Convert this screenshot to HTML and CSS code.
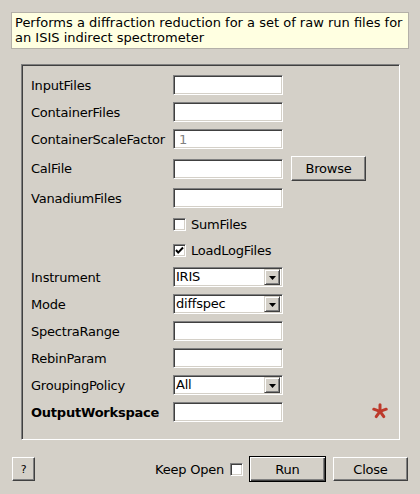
FILE: index.html
```html
<!DOCTYPE html>
<html>
<head>
<meta charset="utf-8">
<link rel="stylesheet" href="styles.css">
</head>
<body>
<div class="desc">Performs a diffraction reduction for a set of raw run files for<br>an ISIS indirect spectrometer</div>
<div class="group">
  <div class="row"><span class="lbl">InputFiles</span><span class="field"></span></div>
  <div class="row"><span class="lbl">ContainerFiles</span><span class="field"></span></div>
  <div class="row"><span class="lbl">ContainerScaleFactor</span><span class="field"><span class="placeholder">1</span></span></div>
  <div class="row row-tall"><span class="lbl">CalFile</span><span class="field"></span><span class="btn browse">Browse</span></div>
  <div class="row"><span class="lbl">VanadiumFiles</span><span class="field"></span></div>
  <div class="row row-check"><span class="lbl"></span><span class="check"></span><span class="check-text">SumFiles</span></div>
  <div class="row row-check"><span class="lbl"></span><span class="check"><svg width="9" height="9" viewBox="0 0 9 9"><path d="M1 4 L3.2 6.6 L8 1.5" fill="none" stroke="#000" stroke-width="2"/></svg></span><span class="check-text">LoadLogFiles</span></div>
  <div class="row"><span class="lbl">Instrument</span><span class="combo"><span class="combo-text">IRIS</span><span class="combo-btn"><svg width="7" height="4" viewBox="0 0 7 4"><path d="M0 0 H7 L3.5 4 Z" fill="#000"/></svg></span></span></div>
  <div class="row"><span class="lbl">Mode</span><span class="combo"><span class="combo-text">diffspec</span><span class="combo-btn"><svg width="7" height="4" viewBox="0 0 7 4"><path d="M0 0 H7 L3.5 4 Z" fill="#000"/></svg></span></span></div>
  <div class="row"><span class="lbl">SpectraRange</span><span class="field"></span></div>
  <div class="row"><span class="lbl">RebinParam</span><span class="field"></span></div>
  <div class="row"><span class="lbl">GroupingPolicy</span><span class="combo"><span class="combo-text">All</span><span class="combo-btn"><svg width="7" height="4" viewBox="0 0 7 4"><path d="M0 0 H7 L3.5 4 Z" fill="#000"/></svg></span></span></div>
  <div class="row"><span class="lbl bold">OutputWorkspace</span><span class="field"></span><span class="star"><svg width="16" height="16" viewBox="0 0 16 16"><g stroke="#bd3a2c" stroke-width="3" stroke-linecap="round"><line x1="8" y1="8.3" x2="8" y2="1.8"/><line x1="8" y1="8.3" x2="14.2" y2="6.2"/><line x1="8" y1="8.3" x2="11.8" y2="13.6"/><line x1="8" y1="8.3" x2="4.2" y2="13.6"/><line x1="8" y1="8.3" x2="1.8" y2="6.2"/></g></svg></span></div>
</div>
<div class="footer">
  <span class="btn help">?</span>
  <span class="spacer"></span>
  <span class="keep">Keep Open</span>
  <span class="check keep-check"></span>
  <span class="btn run">Run</span>
  <span class="btn close">Close</span>
</div>
</body>
</html>
```
FILE: styles.css
```css
html, body {
  margin: 0;
  padding: 0;
}
body {
  width: 420px;
  height: 494px;
  background: #d4d0c8;
  font-family: "DejaVu Sans", sans-serif;
  font-size: 13px;
  letter-spacing: -0.22px;
  color: #000;
  overflow: hidden;
}
.desc {
  margin: 12px 11px 0 11px;
  padding: 2px 3px 3px 3px;
  border: 1px solid #b4b0a8;
  background: #ffffe1;
  line-height: 15px;
  height: 30px;
  white-space: nowrap;
  letter-spacing: 0;
}
.group {
  margin: 15px 0 0 21px;
  width: 379px;
  height: 376px;
  box-sizing: border-box;
  border: 1px solid;
  border-color: #808080 #fff #fff #808080;
  box-shadow: inset 1px 1px #404040;
  padding: 10px 0 0 9px;
  display: flex;
  flex-direction: column;
  gap: 7px;
}
.row {
  display: flex;
  align-items: center;
  height: 20px;
}
.row-tall { height: 25px; }
.row-check { height: 19px; }
.lbl {
  width: 142px;
  flex: none;
  white-space: nowrap;
}
.bold { font-weight: bold; }
.field, .combo {
  width: 110px;
  height: 20px;
  flex: none;
  box-sizing: border-box;
  background: #fff;
  border: 1px solid;
  border-color: #808080 #fff #fff #808080;
  box-shadow: inset 1px 1px #404040, inset -1px -1px #d4d0c8;
  display: flex;
  align-items: center;
}
.placeholder {
  color: #808080;
  padding-left: 5px;
}
.combo {
  padding: 2px;
}
.combo-text {
  flex: 1;
  padding-left: 0;
  line-height: 16px;
}
.combo-btn {
  width: 16px;
  height: 16px;
  box-sizing: border-box;
  background: #d4d0c8;
  border: 1px solid;
  border-color: #d4d0c8 #404040 #404040 #d4d0c8;
  box-shadow: inset 1px 1px #fff, inset -1px -1px #808080;
  display: flex;
  align-items: center;
  justify-content: center;
  padding-top: 1px;
}
.combo-btn svg { display: block; }
.btn {
  box-sizing: border-box;
  background: #d4d0c8;
  border: 1px solid;
  border-color: #fff #404040 #404040 #fff;
  box-shadow: inset -1px -1px #808080;
  display: flex;
  align-items: center;
  justify-content: center;
  flex: none;
}
.browse {
  width: 75px;
  height: 25px;
  margin-left: 8px;
}
.check {
  width: 13px;
  height: 13px;
  box-sizing: border-box;
  background: #fff;
  border: 1px solid;
  border-color: #808080 #fff #fff #808080;
  box-shadow: inset 1px 1px #404040, inset -1px -1px #d4d0c8;
  display: flex;
  align-items: center;
  justify-content: center;
  flex: none;
}
.check svg { display: block; }
.check-text {
  margin-left: 5px;
}
.star {
  margin-left: 89px;
  margin-bottom: 3px;
  display: flex;
}
.star svg { display: block; }
.footer {
  display: flex;
  align-items: center;
  height: 26px;
  margin: 16px 12px 0 12px;
}
.help {
  width: 23px;
  height: 24px;
  font-size: 11px;
}
.spacer { flex: 1; }
.keep {
  margin-right: 6px;
}
.keep-check {
  width: 13px;
  height: 13px;
}
.run {
  width: 77px;
  height: 26px;
  margin-left: 6px;
  border: 1px solid #000;
  box-shadow: inset 1px 1px #fff, inset -1px -1px #404040, inset -2px -2px #808080;
}
.close {
  width: 75px;
  height: 24px;
  margin-left: 7px;
}
```
